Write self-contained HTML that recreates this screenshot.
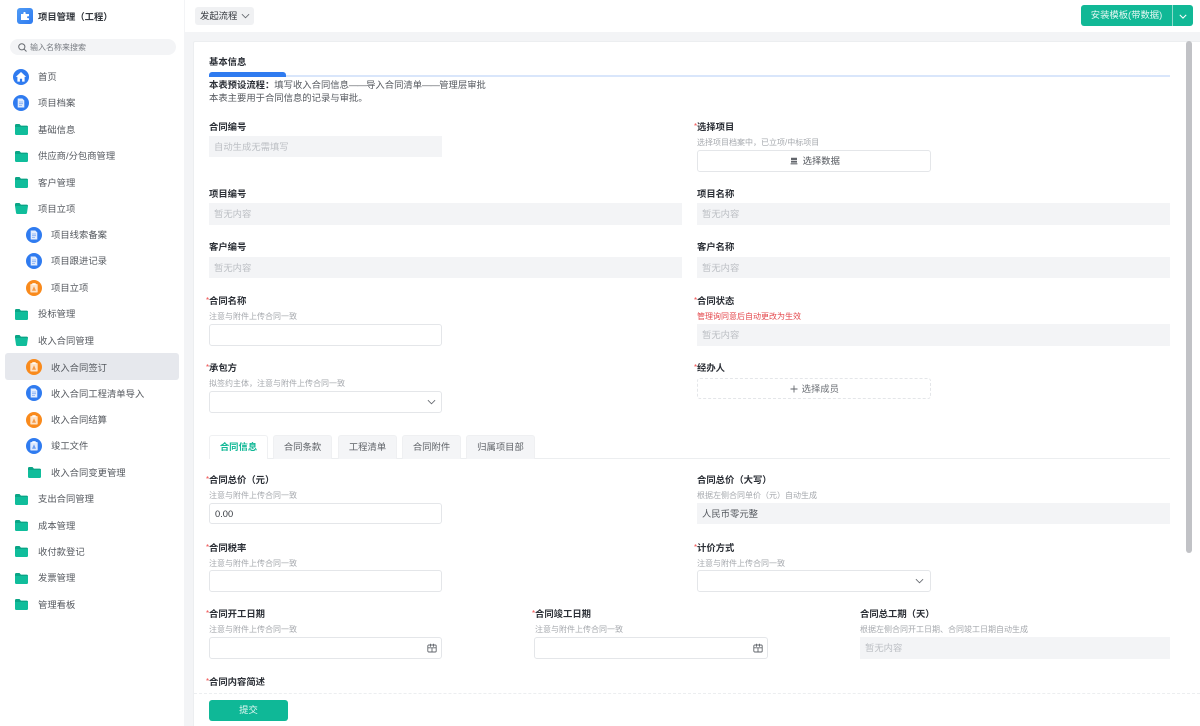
<!DOCTYPE html>
<html lang="zh-CN">
<head>
<meta charset="utf-8">
<title>项目管理（工程）</title>
<style>
*{box-sizing:border-box}
html,body{margin:0;padding:0;width:1200px;height:726px;overflow:hidden;background:#f3f4f6;font-family:"Liberation Sans","Noto Sans CJK SC",sans-serif;color:#1f2329}
#wrap{position:absolute;left:0;top:0;width:1200px;height:726px;overflow:hidden;filter:blur(.35px)}
.a{position:absolute;white-space:nowrap}
#side{position:absolute;left:0;top:0;width:184px;height:726px;background:#fff}
.n{position:absolute;font-size:9.33px;line-height:14px;color:#55595f;white-space:nowrap}
.ic{position:absolute;width:16px;height:16px}
.fd{position:absolute;width:13px;height:11px}
.l{position:absolute;font-size:9.33px;line-height:14px;font-weight:700;color:#2b2f36;white-space:nowrap}
.l.r::before{content:"*";position:absolute;left:-3px;top:0;color:#f04b4b;font-weight:400;font-size:8px}
.h{position:absolute;font-size:8px;line-height:12px;margin-top:1px;color:#a6a9ae;white-space:nowrap}
.f{position:absolute;height:21.33px;background:#f3f4f6;font-size:9.33px;line-height:23.33px;padding-left:5px;color:#bcbfc4;white-space:nowrap}
.i{position:absolute;height:21.33px;background:#fff;border:1px solid #e4e6e9;border-radius:3px;font-size:9.33px;line-height:21.33px;padding-left:5px;color:#55595f}
.t{position:absolute;top:435px;height:24px;background:#f4f5f7;border:1px solid #eff0f2;border-bottom:none;border-radius:3px 3px 0 0;font-size:9.33px;line-height:23px;text-align:center;color:#5f6368}
.d{letter-spacing:-.75px}
</style>
</head>
<body>
<svg width="0" height="0" style="position:absolute">
<defs>
<symbol id="folder" viewBox="0 0 13 11"><path d="M0 1.2C0 .5.5 0 1.2 0h3.3l1.4 1.6h5.9c.7 0 1.2.5 1.2 1.2V3H0z" fill="#0aa586"/><path d="M0 3h13v6.8c0 .7-.5 1.2-1.2 1.2H1.2C.5 11 0 10.500 0 9.800z" fill="#10bd9b"/></symbol>
<symbol id="folderopen" viewBox="0 0 13 11"><path d="M0 1.2C0 .5.5 0 1.2 0h3.3l1.4 1.6h5.9c.7 0 1.2.5 1.2 1.2V3H0z" fill="#0aa586"/><path d="M0 3h13l-1 6.800c-.1.7-.5 1.200-1.200 1.200H2.200c-.7 0-1.100-.5-1.200-1.200z" fill="#10bd9b"/></symbol>
<symbol id="home" viewBox="0 0 16 16"><circle cx="8" cy="8" r="8" fill="#2f7bf0"/><path d="M8 3 2.800 7.900h1.600v4.700h2.500V9.700h2.200v2.900h2.500V7.900h1.600z" fill="#fff"/></symbol>
<symbol id="doc" viewBox="0 0 16 16"><circle cx="8" cy="8" r="8" fill="#2f7bf0"/><path d="M4.700 3.500h4.600l2 2v7h-6.600z" fill="#e3edfd"/><path d="M6 7h4M6 8.700h4M6 10.400h3" stroke="#7fabf5" stroke-width=".8"/></symbol>
<symbol id="clipo" viewBox="0 0 16 16"><circle cx="8" cy="8" r="8" fill="#f98a1c"/><rect x="4.300" y="4" width="7.400" height="8.500" rx=".8" fill="#fde3c8"/><rect x="6.300" y="3.200" width="3.400" height="1.600" fill="#fff"/><path d="M8 6.200 6 10.800h4z" fill="#f59a49"/></symbol>
<symbol id="clipb" viewBox="0 0 16 16"><circle cx="8" cy="8" r="8" fill="#2f7bf0"/><rect x="4.300" y="4" width="7.400" height="8.500" rx=".8" fill="#dfeafd"/><rect x="6.300" y="3.200" width="3.400" height="1.600" fill="#fff"/><path d="M8 6.200 6 10.800h4z" fill="#6d9ff2"/></symbol>
<symbol id="chev" viewBox="0 0 10 6"><path d="M1 1l4 4 4-4" fill="none" stroke="#666a70" stroke-width="1"/></symbol>
<symbol id="cal" viewBox="0 0 10 10"><rect x=".8" y="2" width="8.400" height="7" rx="1" fill="none" stroke="#62666c" stroke-width=".9"/><path d="M.8 4.800h8.400M3.500 .7v3M6.500 .7v3M5 4.800V9" stroke="#62666c" stroke-width=".9" fill="none"/></symbol>
</defs>
</svg>
<div id="wrap">
<!-- sidebar -->
<div id="side">
  <div class="a" style="left:17px;top:8px;width:16px;height:16px;border-radius:3px;background:linear-gradient(135deg,#4f9bf5,#2f7bf0)"></div>
  <svg class="a" style="left:21px;top:12px" width="8" height="8" viewBox="0 0 8 8"><path d="M0 2h2.400V1a1.100 1.100 0 0 1 2.200 0v1H8v2.200H7a1 1 0 0 0 0 2h1V8H0z" fill="#fff"/></svg>
  <div class="a" style="left:38px;top:10px;font-size:9.33px;line-height:14px;font-weight:700;color:#33373d">项目管理（工程）</div>
  <div class="a" style="left:10px;top:39px;width:166px;height:16px;background:#f3f4f6;border-radius:8px"></div>
  <svg class="a" style="left:18px;top:43px" width="9" height="9" viewBox="0 0 9 9"><circle cx="3.800" cy="3.800" r="3.100" fill="none" stroke="#666a70"/><path d="M6.200 6.200 8.500 8.500" stroke="#666a70"/></svg>
  <div class="a" style="left:30px;top:41.500px;font-size:8px;line-height:12px;color:#777b81">输入名称来搜索</div>

  <svg class="ic" style="left:13px;top:69px"><use href="#home"/></svg><div class="n" style="left:38px;top:70px">首页</div>
  <svg class="ic" style="left:13px;top:95px"><use href="#doc"/></svg><div class="n" style="left:38px;top:96px">项目档案</div>
  <svg class="fd" style="left:15px;top:124px"><use href="#folder"/></svg><div class="n" style="left:38px;top:123px">基础信息</div>
  <svg class="fd" style="left:15px;top:151px"><use href="#folder"/></svg><div class="n" style="left:38px;top:149px">供应商/分包商管理</div>
  <svg class="fd" style="left:15px;top:177px"><use href="#folder"/></svg><div class="n" style="left:38px;top:175.500px">客户管理</div>
  <svg class="fd" style="left:15px;top:203px"><use href="#folderopen"/></svg><div class="n" style="left:38px;top:202px">项目立项</div>
  <svg class="ic" style="left:26px;top:227px"><use href="#doc"/></svg><div class="n" style="left:51px;top:228px">项目线索备案</div>
  <svg class="ic" style="left:26px;top:253px"><use href="#doc"/></svg><div class="n" style="left:51px;top:254px">项目跟进记录</div>
  <svg class="ic" style="left:26px;top:280px"><use href="#clipo"/></svg><div class="n" style="left:51px;top:281px">项目立项</div>
  <svg class="fd" style="left:15px;top:309px"><use href="#folder"/></svg><div class="n" style="left:38px;top:307px">投标管理</div>
  <svg class="fd" style="left:15px;top:335px"><use href="#folderopen"/></svg><div class="n" style="left:38px;top:334px">收入合同管理</div>
  <div class="a" style="left:5px;top:353px;width:174px;height:27px;background:#e6e8ed;border-radius:3px"></div>
  <svg class="ic" style="left:26px;top:359px"><use href="#clipo"/></svg><div class="n" style="left:51px;top:360.500px">收入合同签订</div>
  <svg class="ic" style="left:26px;top:385px"><use href="#doc"/></svg><div class="n" style="left:51px;top:387px">收入合同工程清单导入</div>
  <svg class="ic" style="left:26px;top:412px"><use href="#clipo"/></svg><div class="n" style="left:51px;top:413px">收入合同结算</div>
  <svg class="ic" style="left:26px;top:438px"><use href="#clipb"/></svg><div class="n" style="left:51px;top:439px">竣工文件</div>
  <svg class="fd" style="left:28px;top:467px"><use href="#folder"/></svg><div class="n" style="left:51px;top:466px">收入合同变更管理</div>
  <svg class="fd" style="left:15px;top:494px"><use href="#folder"/></svg><div class="n" style="left:38px;top:492px">支出合同管理</div>
  <svg class="fd" style="left:15px;top:520px"><use href="#folder"/></svg><div class="n" style="left:38px;top:518.500px">成本管理</div>
  <svg class="fd" style="left:15px;top:546px"><use href="#folder"/></svg><div class="n" style="left:38px;top:545px">收付款登记</div>
  <svg class="fd" style="left:15px;top:573px"><use href="#folder"/></svg><div class="n" style="left:38px;top:571px">发票管理</div>
  <svg class="fd" style="left:15px;top:599px"><use href="#folder"/></svg><div class="n" style="left:38px;top:597.500px">管理看板</div>
</div>

<!-- top bar -->
<div class="a" style="left:185px;top:0;width:1015px;height:32px;background:#fff"></div>
<div class="a" style="left:195px;top:7px;width:59px;height:18px;background:#f0f1f3;border-radius:3px"></div>
<div class="a" style="left:200px;top:9px;font-size:9.33px;line-height:14px;color:#33373d">发起流程</div>
<svg class="a" style="left:241px;top:13px" width="9" height="6"><use href="#chev"/></svg>
<div class="a" style="left:1081px;top:5px;width:112px;height:21px;background:#11b896;border-radius:3px"></div>
<div class="a" style="left:1172px;top:5px;width:1px;height:21px;background:#8cdccb"></div>
<div class="a" style="left:1081px;top:5px;width:91px;font-size:9.33px;line-height:21px;text-align:center;color:#e6f8f4">安装模板(带数据)</div>
<svg class="a" style="left:1179px;top:14px" width="8" height="5" viewBox="0 0 10 6"><path d="M1 1l4 4 4-4" fill="none" stroke="#fff" stroke-width="1.300"/></svg>

<!-- card -->
<div class="a" style="left:193px;top:41px;width:1007px;height:685px;background:#fff;border-radius:2px 0 0 0;border-top:1px solid #eceef0;border-left:1px solid #eceef0"></div>
<div class="a" style="left:1186px;top:41px;width:6px;height:512px;background:#c1c2c6;border-radius:3px"></div>

<div class="a" style="left:209px;top:55px;font-size:9.33px;line-height:14px;font-weight:700;color:#2b2f36">基本信息</div>
<div class="a" style="left:209px;top:75px;width:961px;height:2px;background:#d9e6fb"></div>
<div class="a" style="left:209px;top:72px;width:77px;height:5px;background:#2f7bf0;border-radius:3px 3px 0 0"></div>
<div class="a" style="left:209px;top:78px;font-size:9.33px;line-height:14px;color:#55595f"><b style="color:#2b2f36">本表预设流程：</b>填写收入合同信息<span class="d">——</span>导入合同清单<span class="d">——</span>管理层审批</div>
<div class="a" style="left:209px;top:91px;font-size:9.33px;line-height:14px;color:#55595f">本表主要用于合同信息的记录与审批。</div>

<div class="l" style="left:209px;top:120px">合同编号</div>
<div class="f" style="left:209px;top:136px;width:233px">自动生成无需填写</div>
<div class="l r" style="left:697px;top:120px">选择项目</div>
<div class="h" style="left:697px;top:136px">选择项目档案中，已立项/中标项目</div>
<div class="i" style="left:697px;top:150.400px;width:234px;text-align:center;padding:0 0 0 2px">
  <svg width="8" height="8" viewBox="0 0 8 8" style="vertical-align:-1px;margin-right:2px"><path d="M1 .8h6v2.200H1zM1 3.800h6v1.800H1zM.6 6.200h6.800v1.200H.6z" fill="#62666c"/></svg> 选择数据</div>

<div class="l" style="left:209px;top:187px">项目编号</div>
<div class="f" style="left:209px;top:203.400px;width:473px">暂无内容</div>
<div class="l" style="left:697px;top:187px">项目名称</div>
<div class="f" style="left:697px;top:203.400px;width:473px">暂无内容</div>

<div class="l" style="left:209px;top:240px">客户编号</div>
<div class="f" style="left:209px;top:257px;width:473px">暂无内容</div>
<div class="l" style="left:697px;top:240px">客户名称</div>
<div class="f" style="left:697px;top:257px;width:473px">暂无内容</div>

<div class="l r" style="left:209px;top:294px">合同名称</div>
<div class="h" style="left:209px;top:310px">注意与附件上传合同一致</div>
<div class="i" style="left:209px;top:324.400px;width:233px"></div>
<div class="l r" style="left:697px;top:294px">合同状态</div>
<div class="h" style="left:697px;top:310px;color:#e4484d">管理询同意后自动更改为生效</div>
<div class="f" style="left:697px;top:324.400px;width:473px">暂无内容</div>

<div class="l r" style="left:209px;top:361px">承包方</div>
<div class="h" style="left:209px;top:377px">拟签约主体，注意与附件上传合同一致</div>
<div class="i" style="left:209px;top:391.300px;width:233px"></div>
<svg class="a" style="left:427px;top:399px" width="9" height="6"><use href="#chev"/></svg>
<div class="l r" style="left:697px;top:361px">经办人</div>
<div class="i" style="left:697px;top:377.500px;width:234px;text-align:center;padding:0 0 0 1px;border-style:dashed;color:#6b6f75">
  <svg width="8" height="8" viewBox="0 0 8 8" style="vertical-align:-1px;margin-right:1px"><path d="M4 .5v7M.5 4h7" stroke="#62666c" stroke-width=".9"/></svg> 选择成员</div>

<!-- tabs -->
<div class="a" style="left:209px;top:458px;width:961px;height:1px;background:#eceef0"></div>
<div class="t" style="left:209px;width:59px;background:#fff;color:#11b896;font-weight:700;height:24px">合同信息</div>
<div class="t" style="left:273px;width:59px">合同条款</div>
<div class="t" style="left:338px;width:59px">工程清单</div>
<div class="t" style="left:402px;width:59px">合同附件</div>
<div class="t" style="left:466px;width:69px">归属项目部</div>

<div class="l r" style="left:209px;top:473px">合同总价（元）</div>
<div class="h" style="left:209px;top:489px">注意与附件上传合同一致</div>
<div class="i" style="left:209px;top:502.700px;width:233px;color:#33373d">0.00</div>
<div class="l" style="left:697px;top:473px">合同总价（大写）</div>
<div class="h" style="left:697px;top:489px">根据左侧合同单价（元）自动生成</div>
<div class="f" style="left:697px;top:502.700px;width:473px;color:#55595f">人民币零元整</div>

<div class="l r" style="left:209px;top:541px">合同税率</div>
<div class="h" style="left:209px;top:557px">注意与附件上传合同一致</div>
<div class="i" style="left:209px;top:570.400px;width:233px"></div>
<div class="l r" style="left:697px;top:541px">计价方式</div>
<div class="h" style="left:697px;top:557px">注意与附件上传合同一致</div>
<div class="i" style="left:697px;top:570.400px;width:234px"></div>
<svg class="a" style="left:915px;top:578px" width="9" height="6"><use href="#chev"/></svg>

<div class="l r" style="left:209px;top:607px">合同开工日期</div>
<div class="h" style="left:209px;top:623px">注意与附件上传合同一致</div>
<div class="i" style="left:209px;top:637.300px;width:233px"></div>
<svg class="a" style="left:427px;top:643px" width="10" height="10"><use href="#cal"/></svg>
<div class="l r" style="left:535px;top:607px">合同竣工日期</div>
<div class="h" style="left:535px;top:623px">注意与附件上传合同一致</div>
<div class="i" style="left:534px;top:637.300px;width:234px"></div>
<svg class="a" style="left:753px;top:643px" width="10" height="10"><use href="#cal"/></svg>
<div class="l" style="left:860px;top:607px">合同总工期（天）</div>
<div class="h" style="left:860px;top:623px">根据左侧合同开工日期、合同竣工日期自动生成</div>
<div class="f" style="left:860px;top:637.300px;width:310px">暂无内容</div>

<div class="l r" style="left:209px;top:675px">合同内容简述</div>

<!-- footer -->
<div class="a" style="left:194px;top:693px;width:1006px;height:33px;background:#fff;border-top:1px dashed #eceef0"></div>
<div class="a" style="left:209px;top:700px;width:79px;height:21px;background:#0fb897;border-radius:3px;font-size:9.33px;line-height:21px;text-align:center;color:#e6f8f4">提交</div>
</div>
</body>
</html>
